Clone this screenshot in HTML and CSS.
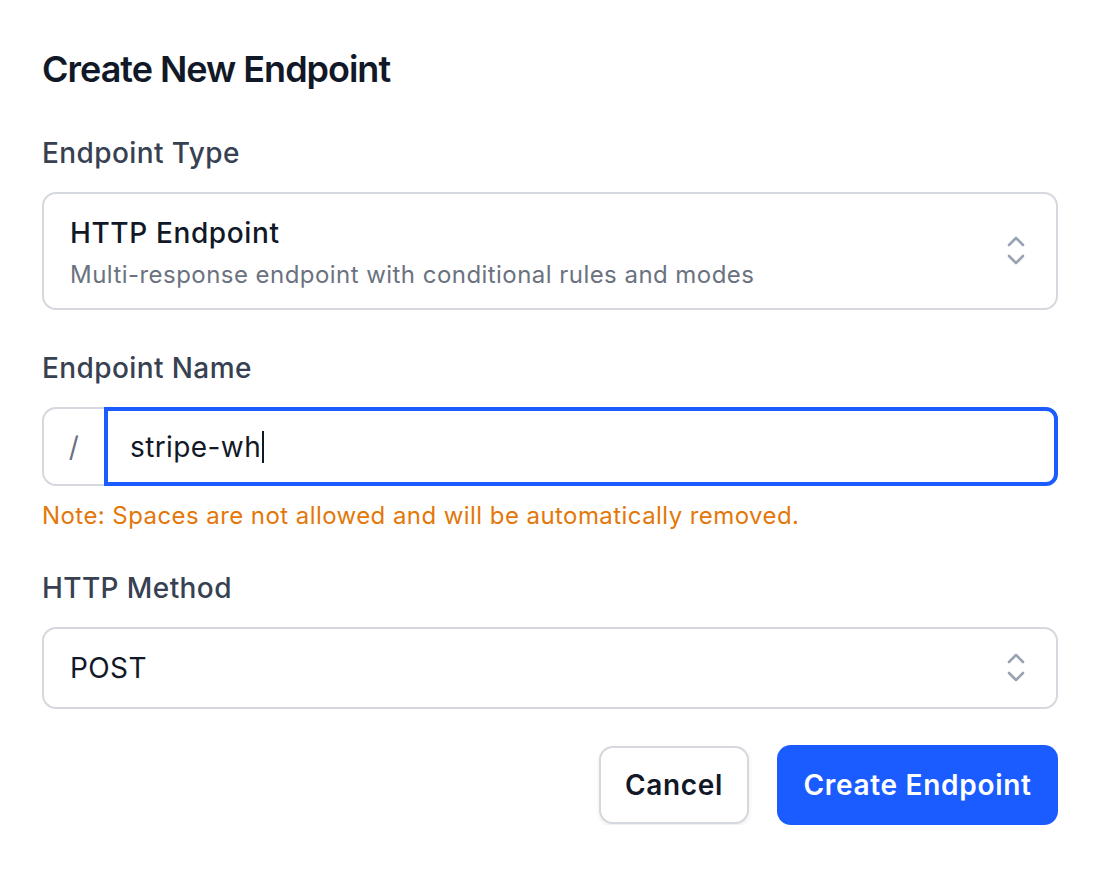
FILE: index.html
```html
<!DOCTYPE html>
<html lang="en">
<head>
<meta charset="utf-8">
<title>Create New Endpoint</title>
<link rel="stylesheet" href="styles.css">
</head>
<body>
<div class="modal">
  <h1 class="title">Create New Endpoint</h1>

  <div class="field field-type">
    <label class="label">Endpoint Type</label>
    <div class="select select-type">
      <div class="select-text">
        <div class="option-title">HTTP Endpoint</div>
        <div class="option-desc">Multi-response endpoint with conditional rules and modes</div>
      </div>
      <svg class="chev" viewBox="0 0 20 32" width="20" height="32" aria-hidden="true">
        <path d="M3 10 L10 3 L17 10" fill="none" stroke="#9aa3b2" stroke-width="2.6" stroke-linecap="round" stroke-linejoin="round"/>
        <path d="M3 21 L10 28 L17 21" fill="none" stroke="#9aa3b2" stroke-width="2.6" stroke-linecap="round" stroke-linejoin="round"/>
      </svg>
    </div>
  </div>

  <div class="field field-name">
    <label class="label">Endpoint Name</label>
    <div class="input-group">
      <span class="prefix">/</span>
      <div class="input"><span class="value">stripe-wh</span><span class="caret"></span></div>
    </div>
    <p class="note">Note: Spaces are not allowed and will be automatically removed.</p>
  </div>

  <div class="field field-method">
    <label class="label">HTTP Method</label>
    <div class="select select-method">
      <div class="select-text">
        <div class="method">POST</div>
      </div>
      <svg class="chev" viewBox="0 0 20 32" width="20" height="32" aria-hidden="true">
        <path d="M3 10 L10 3 L17 10" fill="none" stroke="#9aa3b2" stroke-width="2.6" stroke-linecap="round" stroke-linejoin="round"/>
        <path d="M3 21 L10 28 L17 21" fill="none" stroke="#9aa3b2" stroke-width="2.6" stroke-linecap="round" stroke-linejoin="round"/>
      </svg>
    </div>
  </div>

  <div class="actions">
    <button class="btn btn-cancel">Cancel</button>
    <button class="btn btn-primary">Create Endpoint</button>
  </div>
</div>
</body>
</html>
```

FILE: styles.css
```css
* { box-sizing: border-box; }

html, body {
  margin: 0;
  padding: 0;
  background: #ffffff;
}

body {
  font-family: Inter, "Noto Sans", "Liberation Sans", sans-serif;
  color: #111827;
  letter-spacing: 0.025em;
}

.modal {
  width: 1108px;
  padding: 41px 50px 0 42px;
}

.title {
  margin: 0;
  font-size: 36px;
  line-height: 56px;
  font-weight: 600;
  color: #111827;
  letter-spacing: -0.028em;
}

.field {
  display: flex;
  flex-direction: column;
}

.label {
  display: block;
  font-size: 28px;
  line-height: 40px;
  font-weight: 500;
  color: #374151;
  margin-bottom: 19px;
}

.field-type .label { margin-top: 36px; }
.field-name .label { margin-top: 38px; }
.field-method .label { margin-top: 34px; }

.select {
  display: flex;
  align-items: center;
  justify-content: space-between;
  border: 2px solid #d5d8de;
  border-radius: 14px;
  padding: 0 30px 0 26px;
  background: #fff;
}

.select-type {
  height: 118px;
  padding-top: 4px;
}
.select-method { height: 82px; }

.select-type .chev { margin-top: -4px; }

.option-title {
  font-size: 28px;
  line-height: 40px;
  font-weight: 500;
  color: #111827;
  letter-spacing: 0.022em;
}

.option-desc {
  font-size: 24px;
  line-height: 36px;
  color: #6b7280;
  margin-top: 4px;
  letter-spacing: 0.019em;
}

.method {
  font-size: 28px;
  line-height: 40px;
  color: #111827;
}

.chev { display: block; flex: none; }

.input-group {
  display: flex;
  height: 79px;
}

.prefix {
  width: 62px;
  flex: none;
  display: flex;
  align-items: center;
  justify-content: center;
  border: 2px solid #d5d8de;
  border-right: none;
  border-radius: 14px 0 0 14px;
  color: #6b7280;
  font-size: 28px;
  background: #fff;
}

.input {
  flex: 1;
  display: flex;
  align-items: center;
  border: 4px solid #1a5cff;
  border-radius: 0 12px 12px 0;
  padding-left: 22px;
  font-size: 28px;
  color: #111827;
}

.caret {
  display: inline-block;
  width: 2px;
  height: 32px;
  background: #111827;
  margin-left: 1px;
}

.note {
  margin: 12px 0 0 0;
  font-size: 24px;
  line-height: 36px;
  color: #e47709;
  letter-spacing: 0.018em;
}

.actions {
  display: flex;
  justify-content: flex-end;
  gap: 28px;
  margin-top: 36px;
}

.btn {
  font-family: Inter, "Noto Sans", "Liberation Sans", sans-serif;
  font-size: 28px;
  font-weight: 600;
  letter-spacing: 0.025em;
  border-radius: 14px;
  cursor: pointer;
}

.btn-cancel {
  width: 150px;
  height: 78px;
  margin-top: 1px;
  background: #fff;
  color: #111827;
  border: 2px solid #d5d8de;
  box-shadow: 0 2px 4px rgba(0, 0, 0, 0.08);
}

.btn-primary {
  width: 281px;
  height: 80px;
  background: #1a5cff;
  color: #fff;
  border: none;
}
```
